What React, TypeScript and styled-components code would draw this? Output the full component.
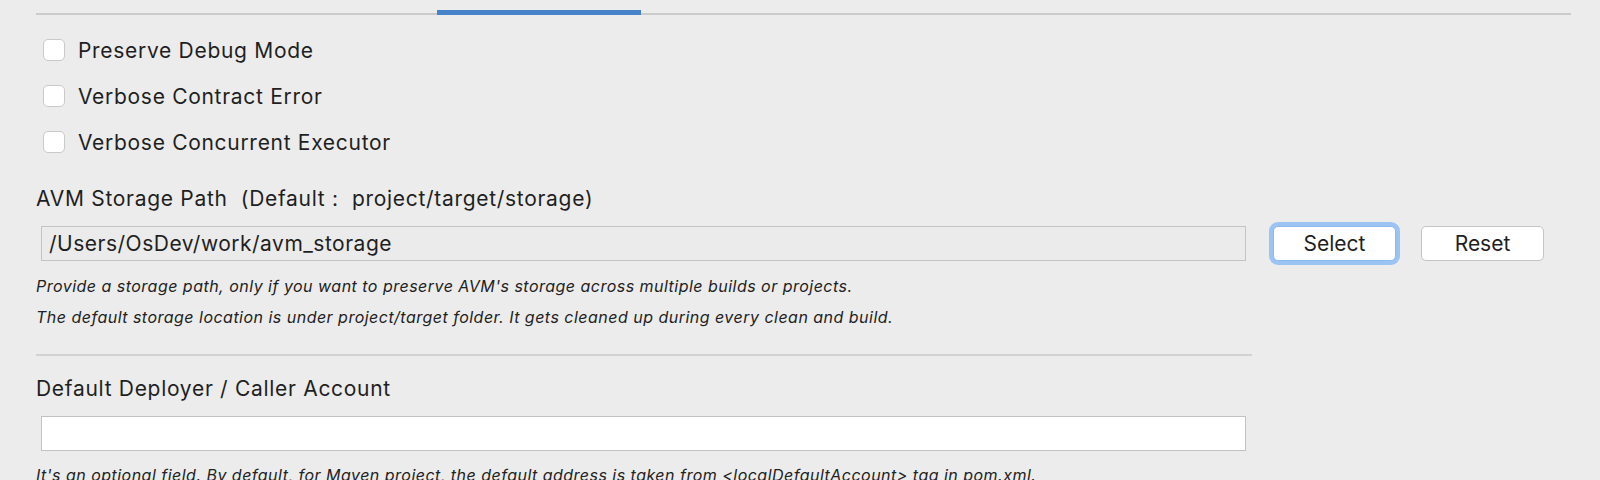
import React from 'react';
import styled, { createGlobalStyle } from 'styled-components';

const Global = createGlobalStyle`
  html, body { margin: 0; padding: 0; background: #ececec; }
  body { font-family: Inter, "Noto Sans", sans-serif; color: #1f1f1f; }
`;

const Page = styled.div`
  width: 1600px;
  height: 480px;
  overflow: hidden;
  box-sizing: border-box;
  padding: 10px 0 0 36px;
  display: flex;
  flex-direction: column;
  & > * { flex-shrink: 0; }
`;

const TabStrip = styled.div`
  width: 1535px;
  height: 5px;
  display: flex;
  align-items: flex-end;
  padding-left: 401px;
  box-sizing: border-box;
  box-shadow: inset 0 -2px 0 #cbcbcb;
`;

const TabIndicator = styled.div`
  width: 204px;
  height: 5px;
  background: #4683c8;
`;

const CheckList = styled.div`
  display: flex;
  flex-direction: column;
  gap: 22px;
  margin-top: 23px;
  padding-left: 7px;
`;

const CheckRow = styled.label`
  display: flex;
  align-items: center;
  gap: 13px;
  height: 24px;
  font-size: 21px;
  letter-spacing: 0.7px;
`;

const Box = styled.span`
  width: 22px;
  height: 22px;
  box-sizing: border-box;
  border: 1px solid #c9c9c9;
  border-radius: 5px;
  background: #fff;
  flex: none;
`;

const SectionLabel = styled.div<{ $top: number }>`
  font-size: 21px;
  line-height: 26px;
  letter-spacing: 0.7px;
  margin-top: ${(p) => p.$top}px;
  white-space: pre;
`;

const FieldRow = styled.div`
  display: flex;
  align-items: center;
  margin-top: 14px;
`;

const Field = styled.div<{ $white?: boolean }>`
  width: 1205px;
  height: 35px;
  box-sizing: border-box;
  margin-left: 5px;
  border: 1px solid #c3c3c3;
  background: ${(p) => (p.$white ? '#ffffff' : '#ebebeb')};
  display: flex;
  align-items: center;
  padding-left: 7px;
  font-size: 21px;
  letter-spacing: 0.5px;
  flex: none;
`;

const Button = styled.button<{ $focused?: boolean }>`
  width: 123px;
  height: 35px;
  box-sizing: border-box;
  border: 1px solid ${(p) => (p.$focused ? '#8fb9ec' : '#c4c4c4')};
  border-radius: 5px;
  background: #fff;
  font-family: Inter, "Noto Sans", sans-serif;
  font-size: 21px;
  color: #1f1f1f;
  padding: 0;
  margin-left: ${(p) => (p.$focused ? 27 : 25)}px;
  box-shadow: ${(p) => (p.$focused ? '0 0 0 4px #9cc4f3' : 'none')};
`;

const Help = styled.div<{ $top: number }>`
  font-size: 16px;
  font-style: italic;
  line-height: 20px;
  letter-spacing: 0.48px;
  margin-top: ${(p) => p.$top}px;
  color: #222;
  white-space: nowrap;
`;

const Separator = styled.div`
  width: 1216px;
  height: 2px;
  background: #d2d2d2;
  margin-top: 27px;
`;

export default function App() {
  return (
    <>
      <Global />
      <Page>
        <TabStrip>
          <TabIndicator />
        </TabStrip>
        <CheckList>
          <CheckRow><Box />Preserve Debug Mode</CheckRow>
          <CheckRow><Box />Verbose Contract Error</CheckRow>
          <CheckRow><Box />Verbose Concurrent Executor</CheckRow>
        </CheckList>
        <SectionLabel $top={32}>{'AVM Storage Path  (Default :  project/target/storage)'}</SectionLabel>
        <FieldRow>
          <Field>/Users/OsDev/work/avm_storage</Field>
          <Button $focused>Select</Button>
          <Button>Reset</Button>
        </FieldRow>
        <Help $top={15}>Provide a storage path, only if you want to preserve AVM's storage across multiple builds or projects.</Help>
        <Help $top={11}>The default storage location is under project/target folder. It gets cleaned up during every clean and build.</Help>
        <Separator />
        <SectionLabel $top={20}>Default Deployer / Caller Account</SectionLabel>
        <FieldRow>
          <Field $white />
        </FieldRow>
        <Help $top={14}>It's an optional field. By default, for Maven project, the default address is taken from &lt;localDefaultAccount&gt; tag in pom.xml.</Help>
      </Page>
    </>
  );
}
